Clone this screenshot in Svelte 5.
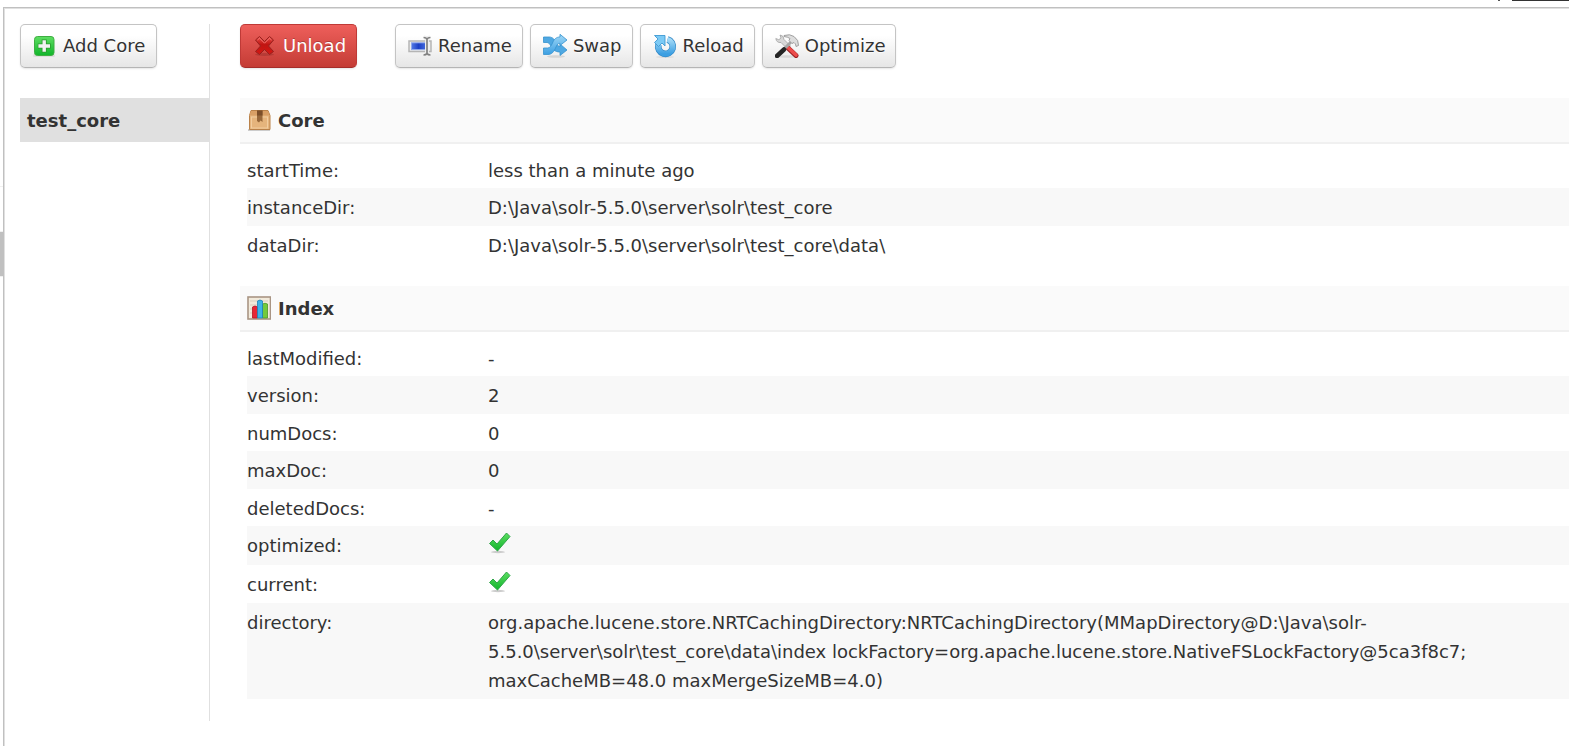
<script lang="ts">
  type Row = { key: string; value?: string; ok?: boolean };

  const core: Row[] = [
    { key: "startTime", value: "less than a minute ago" },
    { key: "instanceDir", value: "D:\\Java\\solr-5.5.0\\server\\solr\\test_core" },
    { key: "dataDir", value: "D:\\Java\\solr-5.5.0\\server\\solr\\test_core\\data\\" },
  ];

  const index: Row[] = [
    { key: "lastModified", value: "-" },
    { key: "version", value: "2" },
    { key: "numDocs", value: "0" },
    { key: "maxDoc", value: "0" },
    { key: "deletedDocs", value: "-" },
    { key: "optimized", ok: true },
    { key: "current", ok: true },
    {
      key: "directory",
      value:
        "org.apache.lucene.store.NRTCachingDirectory:NRTCachingDirectory(MMapDirectory@D:\\Java\\solr-5.5.0\\server\\solr\\test_core\\data\\index lockFactory=org.apache.lucene.store.NativeFSLockFactory@5ca3f8c7; maxCacheMB=48.0 maxMergeSizeMB=4.0)",
    },
  ];

  const actions = ["Rename", "Swap", "Reload", "Optimize"];
</script>

{#snippet icon(name: string)}
  <svg class="icon" viewBox="0 0 24 24" aria-hidden="true">
    {#if name === "Add Core"}
      <rect x="0" y="20" width="22" height="3" rx="1.5" fill="#ddd" />
      <rect x="1.5" y="2.5" width="19.5" height="19" rx="3" fill="url(#green)" stroke="#3fae42" />
      <path d="M11.2 5.500v13M4.800 12h13" stroke="#2a9a2c" stroke-width="5" />
      <path d="M11.200 6.200v11.600M5.400 12h11.600" stroke="#f2f2f2" stroke-width="3.400" />
    {:else if name === "Unload"}
      <ellipse cx="11.500" cy="20.500" rx="9.500" ry="1.500" fill="#9c302c" opacity=".5" />
      <path d="M2.500 6L6.500 2.500l5 5 5-5L20.500 6l-5 6 5 5.500-4 3-5-5-5 5-4-3 5-5.500z" fill="url(#red)" stroke="#97201d" stroke-linejoin="round" />
      <path d="M4.500 6l2-1.800 5 5 5-5 2 1.800" stroke="#f47a76" stroke-width=".9" />
    {:else if name === "Rename"}
      <rect x="1" y="7" width="22" height="10.500" fill="#eee" stroke="#b5b5b5" stroke-width="1.500" />
      <rect x="3.500" y="8.800" width="14" height="6.800" fill="url(#blue)" stroke="#8fa8ec" />
      <path d="M19 5v15M16 3.500q2 0 3 1.500 1-1.500 3-1.500M16 21q2 0 3-1.500 1 1.500 3 1.500" stroke="#eee" stroke-width="4" />
      <path d="M19 5v15M15.500 3.500q2.500 0 3.500 1.500 1-1.500 3.500-1.500M15.500 21q2.500 0 3.500-1.500 1 1.500 3.500 1.500" stroke="#808080" stroke-width="1.700" />
    {:else if name === "Swap"}
      <ellipse cx="13" cy="22.500" rx="9" ry="1.300" fill="#d5d5d5" />
      <path d="M.5 3h5.500c4 0 6 3 7.500 6.500 1 2 2 3 3.500 3v-2.500l7 6-7 5.500v-3.500c-5 0-7.500-2.500-9.500-6.500-1-2-2-3-3.500-3h-3.500z" fill="#4fa8e2" stroke="#3592ce" stroke-width=".8" />
      <path d="M.5 20.500v-6.500h4c2.500 0 3.500-2 5-5 1.500-4 4-6 7.500-6V.3l7 5.700-7 5.500V9.300c-2 0-3 1.200-4 3.700-2 5-4.500 7.500-8 7.500z" fill="url(#sky)" stroke="#3592ce" stroke-width=".8" />
    {:else if name === "Reload"}
      <ellipse cx="12" cy="23" rx="9" ry="1" fill="#ddd" />
      <path d="M14.500 5.500a7.300 7.300 0 1 1-9 5" stroke="#3187c5" stroke-width="6.600" />
      <path d="M14.500 5.500a7.300 7.300 0 1 1-9 5" stroke="url(#sky)" stroke-width="5.400" />
      <path d="M1.500 1.500H12v10.500L9 9l-3.500 3.500-4-4L5 5z" fill="#7ccaf5" stroke="#3e99d2" stroke-width=".9" />
    {:else if name === "Optimize"}
      <ellipse cx="12" cy="22.500" rx="9" ry="1.300" fill="#d8d8d8" />
      <path d="M.8 4.500l3 1.200L6 4 5 1q4 .5 4 4.500L15.500 12 12.500 15 6 8.500Q1.500 9 .8 4.500z" fill="#d8d8d8" stroke="#999" stroke-width=".7" />
      <path d="M13.500 14.500l7.500 7" stroke="#981e20" stroke-width="5" stroke-linecap="round" />
      <path d="M13.500 14l7.500 7" stroke="#ec4c4b" stroke-width="3.600" stroke-linecap="round" />
      <path d="M17 7l-8 8" stroke="#a5a5a5" stroke-width="3" />
      <path d="M9 15.500L2 22" stroke="#252525" stroke-width="4.500" stroke-linecap="round" />
      <path d="M9 1.500q6-2 10 1 5 3.500 4.500 9l-2.500 1q0-3-2-4l-2 1-3-3 1-2q-2-1.500-6-2z" fill="#ddd" stroke="#8e8e8e" stroke-width=".8" />
    {:else if name === "Core"}
      <path d="M1 22h22" stroke="#ccc" stroke-width="2" />
      <path d="M4 2.500h17l2 5v14H2.500v-14z" fill="#e5b47c" stroke="#b98149" />
      <path d="M4 3h17l1.500 4.500H2.500z" fill="#d9a066" />
      <rect x="4.500" y="9" width="16" height="11" stroke="#f2cd9f" />
      <path d="M10 2.500h5.500V14l-2-1.500-1.500 2-2-1.500z" fill="#98683a" />
      <path d="M10 2.500h5.500v5H10z" fill="#7b4e29" />
    {:else if name === "Index"}
      <rect x="1" y="1" width="22.500" height="22" fill="#f2eadb" stroke="#a99584" stroke-width="1.600" />
      <path d="M3 5h18M3 9h18M3 13h18M3 17h18" stroke="#d9cdbb" />
      <path d="M5.500 11q2.500-2 5 0v11h-5z" fill="#e72635" stroke="#b51523" stroke-width=".8" />
      <path d="M15.500 8q2.500-1.500 5 0v14h-5z" fill="#73ca3c" stroke="#4c9823" stroke-width=".8" />
      <path d="M10.500 5q2.500-2 5 0v17h-5z" fill="#3eb3e8" stroke="#1d83b8" stroke-width=".8" />
    {:else}
      <ellipse cx="10" cy="21" rx="7" ry="1.200" fill="#ccc" />
      <path d="M1.500 12.500L5 9l4 4L18.500 2l3.500 3.500L9.500 20z" fill="url(#green)" stroke="#2fa648" stroke-linejoin="round" />
    {/if}
  </svg>
{/snippet}

{#snippet block(title: string, rows: Row[])}
  <section class="block">
    <h2>{@render icon(title)}{title}</h2>
    <dl>
      {#each rows as row}
        <div class="row">
          <dt>{row.key}:</dt>
          <dd>
            {#if row.ok}
              <span class="tick" role="img" aria-label="yes">{@render icon("tick")}</span>
            {:else}
              {row.value}
            {/if}
          </dd>
        </div>
      {/each}
    </dl>
  </section>
{/snippet}

<svg class="defs" width="0" height="0" aria-hidden="true">
  <defs>
    <linearGradient id="green" x2="0" y2="1">
      <stop stop-color="#5ede62" />
      <stop offset="1" stop-color="#10b52b" />
    </linearGradient>
    <linearGradient id="red" x2="0" y2="1">
      <stop stop-color="#e8504b" />
      <stop offset=".45" stop-color="#c01512" />
      <stop offset="1" stop-color="#d51713" />
    </linearGradient>
    <linearGradient id="blue">
      <stop stop-color="#5379e5" />
      <stop offset=".5" stop-color="#1c3fc5" />
      <stop offset="1" stop-color="#4168dc" />
    </linearGradient>
    <linearGradient id="sky" x2="0" y2="1">
      <stop stop-color="#a2d9f7" />
      <stop offset="1" stop-color="#3c9fe2" />
    </linearGradient>
  </defs>
</svg>

<div class="page">
  <header><span class="mark"></span><span class="rule"></span></header>

  <div class="body">
    <div class="menu">
      <span></span>
      <span class="active"></span>
      <span></span>
    </div>

    <main>
      <nav>
        <button type="button">{@render icon("Add Core")}Add Core</button>
        <ul>
          <li><a href="#test_core">test_core</a></li>
        </ul>
      </nav>

      <div class="content">
        <div class="actions">
          <button type="button" class="warn">{@render icon("Unload")}Unload</button>
          {#each actions as action}
            <button type="button">{@render icon(action)}{action}</button>
          {/each}
        </div>
        {@render block("Core", core)}
        {@render block("Index", index)}
      </div>
    </main>
  </div>
</div>

<style>
  :global(body) {
    background: #fff;
    color: #333;
    font: 18px/29px Verdana, "DejaVu Sans", sans-serif;
  }

  .defs {
    position: absolute;
  }

  .page {
    display: flex;
    flex-direction: column;
    min-height: 100vh;
    overflow: hidden;
  }

  header {
    display: flex;
    justify-content: flex-end;
    gap: 12px;
    height: 7px;
  }

  .mark {
    width: 2px;
    height: 1px;
    background: #555;
  }

  .rule {
    width: 57px;
    height: 1px;
    background: #333;
  }

  .body {
    flex: 1;
    display: flex;
  }

  .menu {
    flex: none;
    width: 3px;
    padding-top: 179px;
  }

  .menu span {
    display: block;
    height: 44px;
    border-top: 1px solid #f0f0f0;
  }

  .menu .active {
    background: #c0c0c0;
  }

  main {
    flex: 1;
    min-width: 0;
    display: flex;
    align-items: flex-start;
    padding: 16px 0 25px 16px;
    border: solid #c0c0c0;
    border-width: 1px 0 0 1px;
    box-shadow: inset 1px 1px #e0e0e0;
  }

  nav {
    flex: none;
    align-self: stretch;
    width: 189px;
    border-right: 1px solid #e0e0e0;
  }

  button {
    display: inline-flex;
    align-items: center;
    gap: 6px;
    height: 44px;
    padding: 0 10px 1px 12px;
    border: 1px solid #c4c4c4;
    border-bottom-color: #b5b5b5;
    border-radius: 5px;
    background: linear-gradient(#fff, #fff 25%, #e6e6e6);
    box-shadow: 0 1px 2px rgba(0, 0, 0, 0.1);
    color: #333;
    font: inherit;
    text-shadow: 0 1px 1px rgba(255, 255, 255, 0.8);
    white-space: nowrap;
    cursor: pointer;
  }

  nav button {
    padding-right: 11px;
    vertical-align: top;
  }

  button.warn {
    margin-right: 31px;
    border-color: #bf3a37 #bf3a37 #a52d2a;
    background: linear-gradient(#ee5f5b, #c43c35);
    color: #fff;
    text-shadow: 0 -1px 0 rgba(0, 0, 0, 0.25);
  }

  .icon {
    flex: none;
    display: block;
    width: 24px;
    height: 24px;
    fill: none;
  }

  ul {
    margin: 30px 0 0;
    padding: 0;
    list-style: none;
  }

  li a {
    display: block;
    padding: 8px 7px 7px;
    background: #e0e0e0;
    color: #333;
    font-weight: bold;
    text-decoration: none;
  }

  .content {
    flex: 1;
    min-width: 0;
    padding-left: 30px;
  }

  .actions {
    display: flex;
    gap: 7px;
    margin-bottom: 30px;
  }

  .block {
    margin-bottom: 23px;
  }

  .block:last-child {
    margin-bottom: 22px;
  }

  h2 {
    display: flex;
    align-items: center;
    gap: 7px;
    height: 44px;
    margin: 0 0 7px;
    padding-left: 7px;
    border-bottom: 2px solid #f0f0f0;
    background: #fafafa;
    font-size: 18px;
  }

  dl {
    margin: 0 0 0 7px;
  }

  .row {
    display: flex;
    padding: 5px 0 3px;
  }

  .row:nth-child(even) {
    padding-bottom: 4px;
    background: #f8f8f8;
  }

  dt {
    flex: none;
    width: 241px;
  }

  dd {
    min-width: 0;
    margin: 0;
    padding-right: 60px;
  }

  .tick {
    display: block;
    height: 30px;
  }
</style>
